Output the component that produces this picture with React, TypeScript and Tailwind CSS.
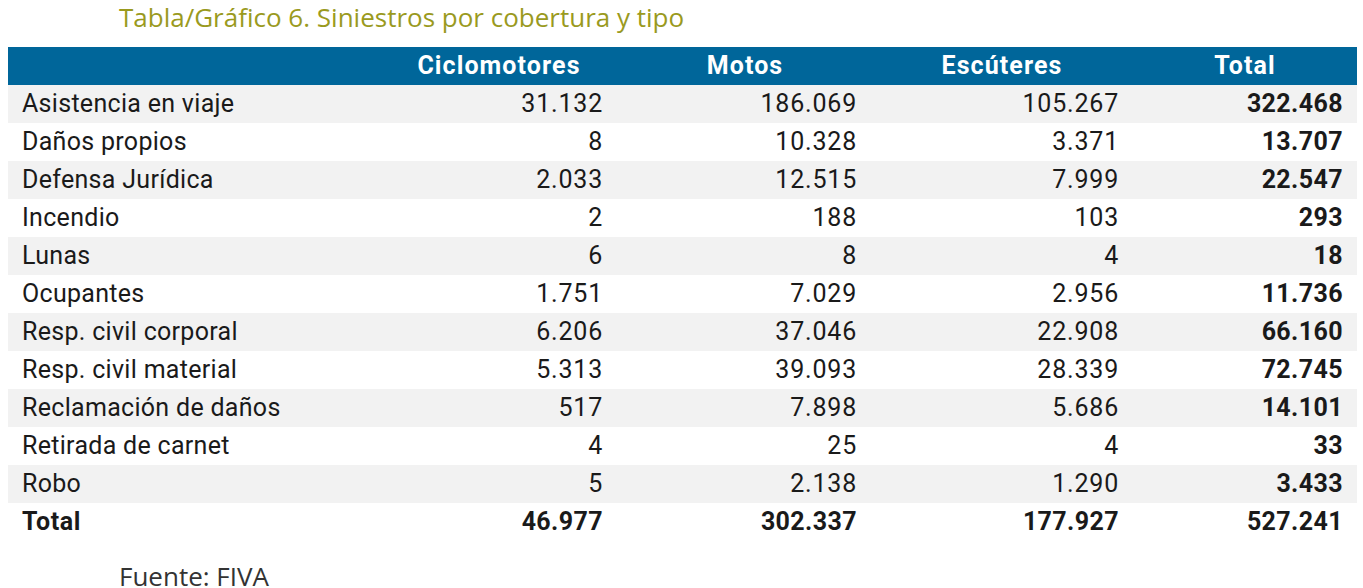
import React from 'react';

interface Row {
  label: string;
  ciclo: string;
  motos: string;
  escu: string;
  total: string;
}

const rows: Row[] = [
  { label: 'Asistencia en viaje', ciclo: '31.132', motos: '186.069', escu: '105.267', total: '322.468' },
  { label: 'Daños propios', ciclo: '8', motos: '10.328', escu: '3.371', total: '13.707' },
  { label: 'Defensa Jurídica', ciclo: '2.033', motos: '12.515', escu: '7.999', total: '22.547' },
  { label: 'Incendio', ciclo: '2', motos: '188', escu: '103', total: '293' },
  { label: 'Lunas', ciclo: '6', motos: '8', escu: '4', total: '18' },
  { label: 'Ocupantes', ciclo: '1.751', motos: '7.029', escu: '2.956', total: '11.736' },
  { label: 'Resp. civil corporal', ciclo: '6.206', motos: '37.046', escu: '22.908', total: '66.160' },
  { label: 'Resp. civil material', ciclo: '5.313', motos: '39.093', escu: '28.339', total: '72.745' },
  { label: 'Reclamación de daños', ciclo: '517', motos: '7.898', escu: '5.686', total: '14.101' },
  { label: 'Retirada de carnet', ciclo: '4', motos: '25', escu: '4', total: '33' },
  { label: 'Robo', ciclo: '5', motos: '2.138', escu: '1.290', total: '3.433' },
];

const cols = 'grid grid-cols-[379px_224px_254px_262px_230px]';
const num = 'text-right pr-2 tracking-[0.8px]';

export default function App() {
  return (
    <div className="w-[1363px] h-[588px] bg-white overflow-hidden">
      {/* Title */}
      <div className="pl-[119px] h-[47px] leading-[34px] font-['Open_Sans',sans-serif] text-[26px] text-[#9a9a1e]">
        Tabla/Gráfico 6. Siniestros por cobertura y tipo
      </div>

      {/* Table */}
      <div className="ml-2 w-[1349px] font-['Roboto',sans-serif] text-[25px] text-[#1a1a1a]">
        <div className={`${cols} h-[38px] items-center bg-[#00669a] text-white font-bold tracking-[1.1px]`}>
          <div />
          <div className="text-center">Ciclomotores</div>
          <div className="text-center pl-[14px]">Motos</div>
          <div className="text-center pl-[12px]">Escúteres</div>
          <div className="text-center pl-[6px]">Total</div>
        </div>
        {rows.map((r, i) => (
          <div
            key={r.label}
            className={`${cols} h-[38px] items-center ${i % 2 === 0 ? 'bg-[#f2f2f2]' : 'bg-white'}`}
          >
            <div className="pl-[14px] tracking-[0.3px]">{r.label}</div>
            <div className={num}>{r.ciclo}</div>
            <div className={num}>{r.motos}</div>
            <div className={num}>{r.escu}</div>
            <div className="text-right pr-[14px] font-bold tracking-[0.4px]">{r.total}</div>
          </div>
        ))}
        <div className={`${cols} h-[38px] items-center font-bold tracking-[0.4px]`}>
          <div className="pl-[14px] tracking-[0.6px]">Total</div>
          <div className="text-right pr-2">46.977</div>
          <div className="text-right pr-2">302.337</div>
          <div className="text-right pr-2">177.927</div>
          <div className="text-right pr-[14px]">527.241</div>
        </div>
      </div>

      {/* Source */}
      <div className="pl-[119px] pt-[18px] leading-[34px] font-['Open_Sans',sans-serif] text-[26px] text-[#333333]">
        Fuente: FIVA
      </div>
    </div>
  );
}
